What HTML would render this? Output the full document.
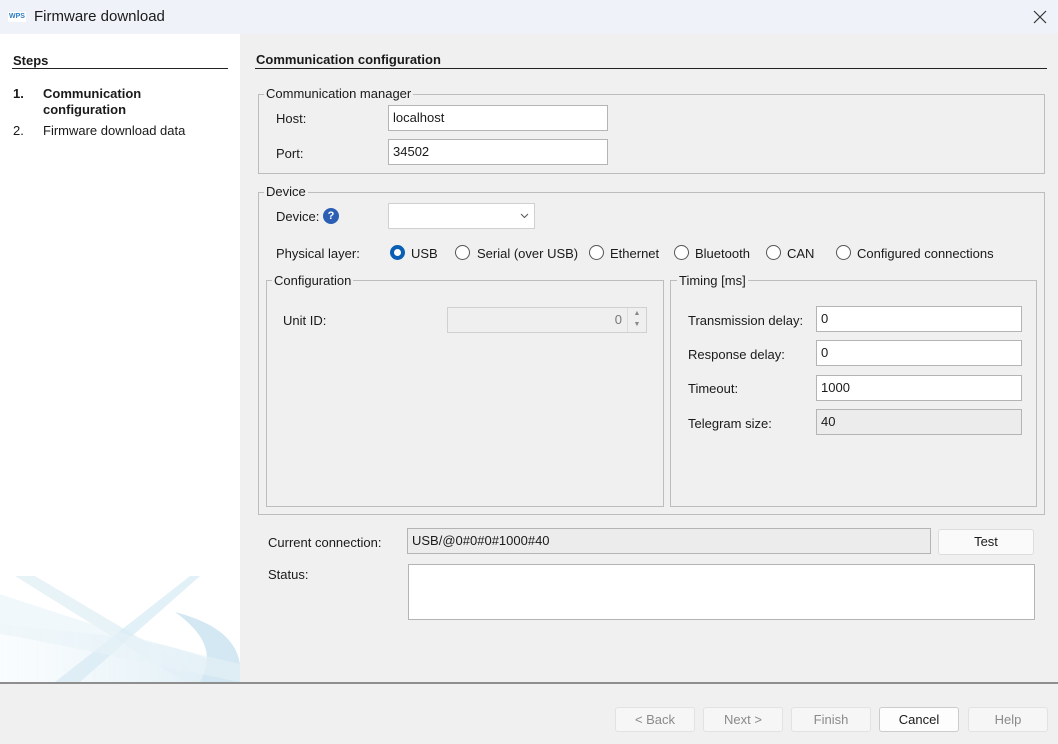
<!DOCTYPE html>
<html><head><style>
*{box-sizing:border-box;margin:0;padding:0}
body{width:1058px;height:744px;position:relative;background:#f0f0f0;font-family:"Liberation Sans",sans-serif;font-size:13px;color:#1a1a1a;overflow:hidden}
.a{position:absolute}
.t{position:absolute;white-space:nowrap;line-height:16px}
.in{position:absolute;background:#fff;border:1px solid #b4b4b4;padding-left:4px;line-height:24px}
.gr{background:#efefef}
.box{position:absolute;border:1px solid #bdbdbd}
.lg{position:absolute;background:#f0f0f0;padding:0 2px;line-height:16px;white-space:nowrap}
.rd{position:absolute;width:15px;height:15px;border-radius:50%;border:1px solid #555;background:#fff}
.btn{position:absolute;top:707px;width:80px;height:25px;border:1px solid #e2e2e2;background:#f6f6f6;border-radius:3px;text-align:center;line-height:23px;color:#8a8a8a}
</style></head><body>
<div class="a" style="left:0;top:0;width:1058px;height:34px;background:#eff3f9"></div>
<div class="t" style="left:8px;top:12px;font-size:7px;font-weight:bold;color:#2a7bc4;background:#fff;line-height:10px;padding:0 1px">WPS</div>
<div class="t" style="left:34px;top:8px;font-size:15px;line-height:18px">Firmware download</div>
<svg class="a" style="left:1033px;top:10px" width="14" height="14"><path d="M1 1L13 13M13 1L1 13" stroke="#333" stroke-width="1.2"/></svg>

<div class="a" style="left:0;top:34px;width:240px;height:648px;background:#fff;overflow:hidden">
<svg width="240" height="648" style="position:absolute;left:0;top:0;opacity:.6">
<defs><linearGradient id="g" x1="0" x2="1"><stop offset="0" stop-color="#d6eaf3" stop-opacity=".3"/><stop offset="1" stop-color="#a9d3e6"/></linearGradient></defs>
<path d="M0 590 C80 600 170 600 240 640 L240 648 L0 648Z" fill="url(#g)" opacity=".7"/>
<path d="M15 542 L35 542 L200 640 L185 648Z" fill="#cfe6f1" opacity=".8"/>
<path d="M55 648 L190 542 L200 542 L80 648Z" fill="#bcdcec" opacity=".7"/>
<path d="M175 578 C220 590 245 610 240 648 L200 648 C215 620 205 600 175 578Z" fill="#b6d9ea"/>
<path d="M0 560 C60 580 150 610 240 630 L240 648 C150 630 60 610 0 600Z" fill="#d8ebf4" opacity=".6"/>
</svg></div>
<div class="t" style="left:13px;top:53px;font-weight:bold">Steps</div>
<div class="a" style="left:12px;top:68px;width:216px;height:1px;background:#222"></div>
<div class="t" style="left:13px;top:86px;font-weight:bold">1.</div>
<div class="t" style="left:43px;top:86px;font-weight:bold">Communication<br>configuration</div>
<div class="t" style="left:13px;top:123px">2.</div>
<div class="t" style="left:43px;top:123px">Firmware download data</div>

<div class="t" style="left:256px;top:52px;font-weight:bold">Communication configuration</div>
<div class="a" style="left:255px;top:68px;width:792px;height:1px;background:#222"></div>

<div class="box" style="left:258px;top:94px;width:787px;height:80px"></div>
<div class="lg" style="left:264px;top:86px">Communication manager</div>
<div class="t" style="left:276px;top:111px">Host:</div>
<div class="in" style="left:388px;top:105px;width:220px;height:26px">localhost</div>
<div class="t" style="left:276px;top:146px">Port:</div>
<div class="in" style="left:388px;top:139px;width:220px;height:26px">34502</div>

<div class="box" style="left:258px;top:192px;width:787px;height:323px"></div>
<div class="lg" style="left:264px;top:184px">Device</div>
<div class="t" style="left:276px;top:209px">Device:</div>
<div class="a" style="left:323px;top:208px;width:16px;height:16px;border-radius:50%;background:#2c5fb3;color:#fff;font-weight:bold;font-size:11px;text-align:center;line-height:16px">?</div>
<div class="in" style="left:388px;top:203px;width:147px;height:26px;border-color:#d0d0d0"></div>
<svg class="a" style="left:520px;top:213px" width="9" height="6"><path d="M1 1L4.5 4.5L8 1" stroke="#555" fill="none"/></svg>
<div class="t" style="left:276px;top:246px">Physical layer:</div>
<div class="rd" style="left:390px;top:245px;border:4px solid #0a5fb4"></div>
<div class="t" style="left:411px;top:246px">USB</div>
<div class="rd" style="left:455px;top:245px"></div><div class="t" style="left:477px;top:246px">Serial (over USB)</div>
<div class="rd" style="left:589px;top:245px"></div><div class="t" style="left:610px;top:246px">Ethernet</div>
<div class="rd" style="left:674px;top:245px"></div><div class="t" style="left:695px;top:246px">Bluetooth</div>
<div class="rd" style="left:766px;top:245px"></div><div class="t" style="left:787px;top:246px">CAN</div>
<div class="rd" style="left:836px;top:245px"></div><div class="t" style="left:857px;top:246px">Configured connections</div>

<div class="box" style="left:266px;top:280px;width:398px;height:227px"></div>
<div class="lg" style="left:272px;top:273px">Configuration</div>
<div class="t" style="left:283px;top:313px">Unit ID:</div>
<div class="in gr" style="left:447px;top:307px;width:200px;height:26px;border-color:#d0d0d0;text-align:right;padding-right:24px;color:#777">0</div>
<div class="a" style="left:627px;top:308px;width:19px;height:24px;border-left:1px solid #ddd;font-size:7px;color:#888;text-align:center;line-height:11px">▲<br>▼</div>

<div class="box" style="left:670px;top:280px;width:367px;height:227px"></div>
<div class="lg" style="left:677px;top:273px">Timing [ms]</div>
<div class="t" style="left:688px;top:313px">Transmission delay:</div>
<div class="in" style="left:816px;top:306px;width:206px;height:26px">0</div>
<div class="t" style="left:688px;top:347px">Response delay:</div>
<div class="in" style="left:816px;top:340px;width:206px;height:26px">0</div>
<div class="t" style="left:688px;top:381px">Timeout:</div>
<div class="in" style="left:816px;top:375px;width:206px;height:26px">1000</div>
<div class="t" style="left:688px;top:416px">Telegram size:</div>
<div class="in gr" style="left:816px;top:409px;width:206px;height:26px;background:#ececec">40</div>

<div class="t" style="left:268px;top:535px">Current connection:</div>
<div class="in" style="left:407px;top:528px;width:524px;height:26px;background:#ececec">USB/@0#0#0#1000#40</div>
<div class="a" style="left:938px;top:529px;width:96px;height:26px;border:1px solid #ddd;background:#fafafa;border-radius:3px;text-align:center;line-height:24px">Test</div>
<div class="t" style="left:268px;top:567px">Status:</div>
<div class="in" style="left:408px;top:564px;width:627px;height:56px"></div>

<div class="a" style="left:0;top:682px;width:1058px;height:2px;background:#8e8e8e"></div>
<div class="btn" style="left:615px">&lt; Back</div>
<div class="btn" style="left:703px">Next &gt;</div>
<div class="btn" style="left:791px">Finish</div>
<div class="btn" style="left:879px;background:#fdfdfd;border-color:#ccc;color:#1a1a1a">Cancel</div>
<div class="btn" style="left:968px">Help</div>
</body></html>
